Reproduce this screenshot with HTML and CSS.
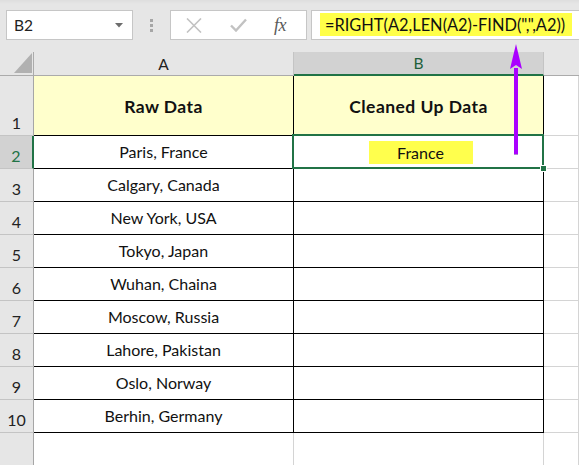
FILE: index.html
```html
<!DOCTYPE html>
<html>
<head>
<meta charset="utf-8">
<link rel="stylesheet" href="styles.css">
</head>
<body>
<div class="app">
  <div class="toolbar">
    <div class="namebox">
      <span class="name">B2</span>
      <svg class="caret" width="8" height="5" viewBox="0 0 8 5"><path d="M0 0H8L4 4.5Z" fill="#6d6d6d"/></svg>
    </div>
    <div class="grip"><i></i><i></i><i></i></div>
    <div class="fbtns">
      <svg class="ico" width="16" height="15" viewBox="0 0 16 15"><path d="M1 0.5L15 14.5M15 0.5L1 14.5" stroke="#c2c2c2" stroke-width="1.6" fill="none"/></svg>
      <svg class="ico" width="17" height="14" viewBox="0 0 17 14"><path d="M1 7.5L6 12.5L16 1.5" stroke="#c2c2c2" stroke-width="2.4" fill="none"/></svg>
      <span class="fx">fx</span>
    </div>
    <div class="formula"><span class="hl">=RIGHT(A2,LEN(A2)-FIND(",",A2))</span></div>
  </div>

  <div class="sheet">
    <div class="corner"><span class="tri"></span></div>
    <div class="ch">A</div>
    <div class="ch sel">B</div>
    <div class="ch last"></div>

    <div class="rh">1</div>
    <div class="c t head">Raw Data</div>
    <div class="c t head">Cleaned Up Data</div>
    <div class="c g"></div>

    <div class="rh sel">2</div>
    <div class="c t">Paris, France</div>
    <div class="c t"><span class="mark">France</span></div>
    <div class="c g"></div>

    <div class="rh">3</div>
    <div class="c t">Calgary, Canada</div>
    <div class="c t"></div>
    <div class="c g"></div>

    <div class="rh">4</div>
    <div class="c t">New York, USA</div>
    <div class="c t"></div>
    <div class="c g"></div>

    <div class="rh">5</div>
    <div class="c t">Tokyo, Japan</div>
    <div class="c t"></div>
    <div class="c g"></div>

    <div class="rh">6</div>
    <div class="c t">Wuhan, Chaina</div>
    <div class="c t"></div>
    <div class="c g"></div>

    <div class="rh">7</div>
    <div class="c t">Moscow, Russia</div>
    <div class="c t"></div>
    <div class="c g"></div>

    <div class="rh">8</div>
    <div class="c t">Lahore, Pakistan</div>
    <div class="c t"></div>
    <div class="c g"></div>

    <div class="rh">9</div>
    <div class="c t">Oslo, Norway</div>
    <div class="c t"></div>
    <div class="c g"></div>

    <div class="rh">10</div>
    <div class="c t">Berhin, Germany</div>
    <div class="c t"></div>
    <div class="c g"></div>

    <div class="rh"></div>
    <div class="c g"></div>
    <div class="c g"></div>
    <div class="c g"></div>
  </div>

  <div class="selection"><span class="handle"></span></div>
  <svg class="arrow" width="20" height="114" viewBox="0 0 20 114">
    <path d="M8 24H12V111H8Z" fill="#aa00ff"/>
    <path d="M10 0L16 25L10 21L4 25Z" fill="#aa00ff"/>
    <rect x="8" y="110" width="4" height="1" fill="#b08ad0"/>
  </svg>
</div>
</body>
</html>
```
FILE: styles.css
```css
* { box-sizing: border-box; }
html, body { margin: 0; padding: 0; }
body {
  width: 579px;
  height: 465px;
  overflow: hidden;
  background: #ffffff;
  font-family: Lato, "Liberation Sans", sans-serif;
  color: #000;
}
.app {
  position: relative;
  width: 579px;
  height: 465px;
  overflow: hidden;
}
.toolbar {
  height: 52px;
  background: linear-gradient(#dedede 0, #e6e6e6 4px, #e6e6e6 100%);
  display: flex;
  align-items: flex-start;
  padding-top: 10px;
  padding-left: 6px;
}
.namebox {
  width: 127px;
  height: 30px;
  background: #fff;
  border: 1px solid #c6c6c6;
  display: flex;
  align-items: center;
  justify-content: space-between;
  padding: 0 9px 0 7px;
}
.name { font-size: 15.5px; color: #222; }
.caret { margin-top: 1px; }
.grip {
  width: 37px;
  height: 30px;
  display: flex;
  flex-direction: column;
  align-items: center;
  justify-content: center;
  gap: 2px;
}
.grip i {
  display: block;
  width: 3px;
  height: 3px;
  background: #a6a6a6;
}
.fbtns {
  width: 137px;
  height: 30px;
  background: #fff;
  border: 1px solid #c6c6c6;
  display: flex;
  align-items: center;
  padding-left: 15px;
  gap: 28px;
}
.fx {
  font-family: "Liberation Serif", serif;
  font-style: italic;
  font-size: 18px;
  color: #5a5a5a;
  letter-spacing: -0.5px;
  margin-left: -1px;
}
.formula {
  flex: 1;
  height: 30px;
  margin-left: 4px;
  margin-right: -2px;
  background: #fff;
  border: 1px solid #c6c6c6;
  padding-top: 2px;
  padding-left: 8px;
}
.hl {
  display: inline-block;
  width: 252px;
  height: 23px;
  line-height: 23px;
  background: #ffff48;
  padding-left: 5px;
  font-size: 16.4px;
  color: #111;
  white-space: nowrap;
}

.sheet {
  display: grid;
  grid-template-columns: 34px 260px 250px 1fr;
  grid-template-rows: 24px 60px repeat(10, 33px) 33px;
}
.corner {
  background: #e6e6e6;
  border-right: 1px solid #ababab;
  border-bottom: 1px solid #ababab;
  position: relative;
}
.tri {
  position: absolute;
  right: 1px;
  bottom: 2px;
  width: 18px;
  height: 20px;
  background: #b1b1b1;
  clip-path: polygon(100% 0, 100% 100%, 0 100%);
}
.ch {
  background: #e6e6e6;
  border-right: 1px solid #c4c4c4;
  border-bottom: 1px solid #ababab;
  display: flex;
  align-items: center;
  justify-content: center;
  font-size: 15.5px;
  color: #222;
}
.ch.sel {
  background: #d2d2d2;
  border-bottom: 2px solid #217346;
  color: #1e5f3b;
}
.ch.last { border-right: none; }
.rh {
  background: #e6e6e6;
  border-right: 1px solid #a6a6a6;
  border-bottom: 1px solid #c4c4c4;
  display: flex;
  align-items: flex-end;
  justify-content: center;
  padding-bottom: 3px;
  font-size: 16px;
  color: #222;
}
.rh.sel {
  background: #d2d2d2;
  border-right: 2px solid #217346;
  color: #217346;
}
.c {
  border-right: 1px solid #d4d4d4;
  border-bottom: 1px solid #d4d4d4;
  display: flex;
  align-items: center;
  justify-content: center;
  font-size: 16px;
  color: #111;
  padding-bottom: 1px;
}
.c.t {
  border-right-color: #000;
  border-bottom-color: #000;
}
.c.head {
  background: #ffffcc;
  font-weight: 700;
  font-size: 17.5px;
  letter-spacing: 0.45px;
  padding-top: 2px;
  padding-bottom: 0;
}
.mark {
  display: inline-block;
  width: 104px;
  height: 23px;
  line-height: 23px;
  text-align: center;
  background: #ffff4d;
  margin-left: 4px;
  margin-top: 1px;
}
.selection {
  position: absolute;
  left: 292px;
  top: 134px;
  width: 252px;
  height: 35px;
  border: 2px solid #217346;
}
.handle {
  position: absolute;
  right: -5px;
  bottom: -5px;
  width: 7px;
  height: 7px;
  background: #217346;
  border: 1px solid #fff;
}
.arrow {
  position: absolute;
  left: 506px;
  top: 44px;
}
```
